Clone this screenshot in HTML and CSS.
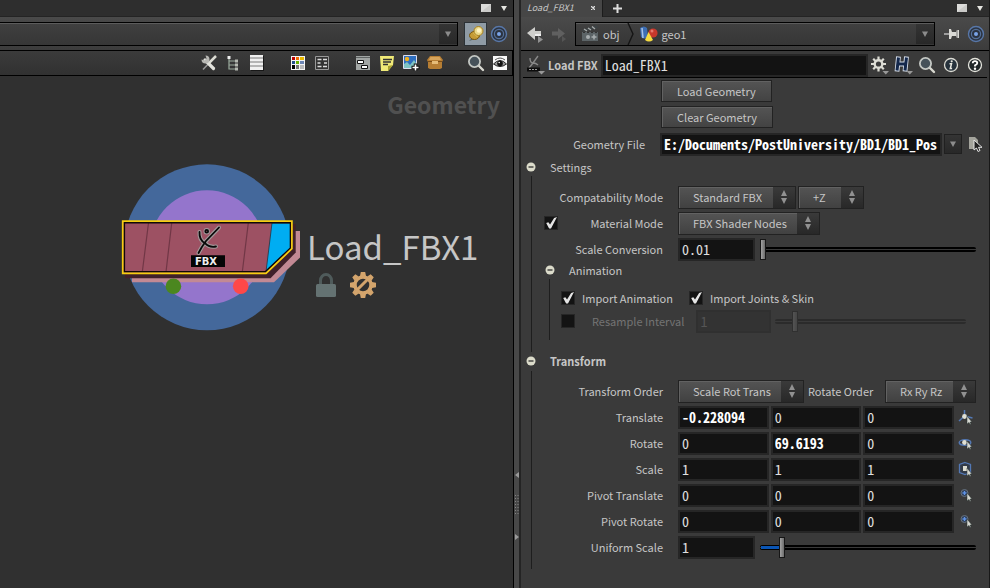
FILE: index.html
```html
<!DOCTYPE html>
<html lang="en">
<head>
<meta charset="utf-8">
<title>Load_FBX1</title>
<link rel="stylesheet" href="styles.css">
</head>
<body>
<svg class="defs" aria-hidden="true">
  <symbol id="target" viewBox="0 0 18 18"><circle cx="9" cy="9" r="7.5" fill="#2b3340" stroke="#5877a8" stroke-width="1.4"/><circle cx="9" cy="9" r="4.6" fill="none" stroke="#557099" stroke-width="1.2"/><circle cx="9" cy="9" r="2" fill="#7aa4e8"/></symbol>
  <symbol id="lens" viewBox="0 0 18 18"><path d="M11.500 11.500 16 16" stroke="#d8d8d0" stroke-width="2.400" stroke-linecap="round"/><circle cx="7.500" cy="7.500" r="5.600" fill="#46525a" stroke="#c4c8c4" stroke-width="1.800"/></symbol>
  <symbol id="updown" viewBox="0 0 8 14"><path d="M4 0 7 6H1zM4 14 1 8H7z" fill="#919191"/></symbol>
  <symbol id="minus" viewBox="0 0 10 10"><circle cx="5" cy="5" r="4.500" fill="#dcdccb"/><path d="M2.500 5h5" stroke="#222" stroke-width="1.200"/></symbol>
  <symbol id="arrow" viewBox="0 0 6 6"><path d="M0 0.500h6L3 6z" fill="#8c8c8c"/></symbol>
  <symbol id="pivot" viewBox="0 0 16 16"><circle cx="6.500" cy="6" r="3.500" fill="#31415c" stroke="#66717d"/><path d="M6.500 4v4M4.500 6h4" stroke="#5f93e6" stroke-width="1.300"/><path d="M9 6v8l2-1.500 1 2 1-.5-1-2h2z" fill="#d6d8d2" stroke="#26302e" stroke-width=".5"/></symbol>
</svg>
<div class="desk">
  <section class="pane" aria-label="Network">
    <div class="tabs">
      <button class="mini" aria-label="Maximize"><svg width="10" height="8"><path d="M0 0h10v8H0z" fill="#dcdcda"/><path d="M10 0v8H0z" fill="#cacac8"/></svg></button>
      <button class="mini" aria-label="Pane menu"><svg width="6" height="5"><path d="M0 0h6L3 5z" fill="#e4e4e0"/></svg></button>
    </div>
    <div class="pathbar">
      <div class="path"><span class="grow"></span><button class="drop" aria-label="Path history"><svg width="6" height="6"><use href="#arrow"/></svg></button></div>
      <button class="pin-on" aria-label="Pin"><svg width="22" height="22" viewBox="0 0 22 22"><path d="M4 18 8 14l2 2z" fill="#566"/><ellipse cx="9.500" cy="12.500" rx="5" ry="4" fill="#c59b36" stroke="#78570e"/><path d="m8 10 4-4 4 4-4 4z" fill="#e1c25c"/><circle cx="13.500" cy="8" r="4.500" fill="#ead88a" stroke="#a8801c"/><circle cx="14" cy="7.500" r="2.200" fill="#fff3c0"/></svg></button>
      <button class="tool" aria-label="Follow selection"><svg width="18" height="18"><use href="#target"/></svg></button>
    </div>
    <div class="toolbar">
      <div class="group">
        <button class="tool" aria-label="Tools"><svg width="18" height="18" viewBox="0 0 18 18"><path d="M15.500 2.500 3 15.500" stroke="#999" stroke-width="1.500"/><path d="M16 2 9 9" stroke="#dcdcd4" stroke-width="2.500"/><path d="M5 6l8.500 8.500" stroke="#e2e2dc" stroke-width="3.200" stroke-linecap="round"/><path d="M5.500 1.500A4 4 0 1 1 1.500 5.500L4.500 6.500 6.500 4.500z" fill="#b8b8b4"/></svg></button>
        <button class="tool" aria-label="Tree view"><svg width="14" height="16" viewBox="0 0 14 16"><path d="M3 2v12h7M3 6h7M3 10h7" fill="none" stroke="#9cac9e" stroke-width="1.200"/><path d="M1.500 1h3v3h-3z" fill="#eee"/><path d="M9 4.500h3v3H9zM9 8.500h3v3H9zM9 12.500h3v3H9z" fill="#b4b8b0"/></svg></button>
        <button class="tool" aria-label="List view"><svg width="14" height="16" viewBox="0 0 14 16"><path d="M1 1h13v15H1z" fill="#181818"/><path d="M0 0h13v15H0z" fill="#f0f0f0"/><path d="M0 2h13v2H0zM0 6h13v2H0zM0 10h13v2H0z" fill="#b4b4b4"/></svg></button>
      </div>
      <div class="group">
        <button class="tool" aria-label="Colors"><svg width="14" height="14" viewBox="0 0 14 14"><path d="M0 0h14v14H0z" fill="#f4f4f4"/><path d="M1 1h3v3H1z" fill="#b00"/><path d="M5 1h3v3H5z" fill="#f06a00"/><path d="M9 1h4v3H9z" fill="#e8b800"/><path d="M1 5h3v3H1z" fill="#24508c"/><path d="M5 5h3v3H5z" fill="#67b000"/><path d="M9 5h4v3H9z" fill="#6c86b4"/><path d="M1 9h3v4H1z" fill="#000"/><path d="M5 9h3v4H5z" fill="#777"/><path d="M9 9h4v4H9z" fill="#bbb"/></svg></button>
        <button class="tool" aria-label="Layout"><svg width="14" height="14" viewBox="0 0 14 14"><path d="M.500.500h13v13H.500z" fill="#333" stroke="#999"/><path d="M2.500 3.500h4M2.500 7h3M2.500 10.500h4M8 3.500h4M9 7h3M8 10.500h4" stroke="#ddd" stroke-width="1.400"/></svg></button>
      </div>
      <div class="group">
        <button class="tool" aria-label="Network box"><svg width="14" height="14" viewBox="0 0 14 14"><path d="M0 0h14v14H0z" fill="#a2a6a4"/><path d="M0 1.500h14" stroke="#606464"/><path d="M1.500 4.500h6v3h-6zM5.500 9.500h6v3h-6z" fill="#fff" stroke="#111"/></svg></button>
        <button class="tool" aria-label="Sticky note"><svg width="15" height="15" viewBox="0 0 15 15"><path d="M0 0h14l-1 9-5 6H1z" fill="#f0ea78"/><path d="m13 9-5 6v-5z" fill="#a8a030"/><path d="M3 3.500h9M3 6h8M3 8.500h5" stroke="#333" stroke-width="1.300"/></svg></button>
        <button class="tool" aria-label="Add image"><svg width="17" height="16" viewBox="0 0 17 16"><path d="M.500.500h13v13H.500z" fill="#2f6fc0" stroke="#dde"/><circle cx="4" cy="4" r="2.200" fill="#f2b020"/><path d="M1 13V9l3-2 3 3 4-5 2 3v5z" fill="#7fc4c4"/><path d="M12.500 8.500v8M8.500 12.500h8" stroke="#111" stroke-width="3.500"/><path d="M12.500 9.500v6M9.500 12.500h6" stroke="#fff" stroke-width="1.600"/></svg></button>
        <button class="tool" aria-label="Asset box"><svg width="16" height="14" viewBox="0 0 16 14"><path d="M3 0h10l3 4-1 2v6l-2 1H3l-2-1V6L0 4z" fill="#b67e34"/><path d="M3.500 1h9L14 4H2z" fill="#d6a45c"/><path d="M1 5.500h14" stroke="#7c4c14"/><path d="M5 5h6v3H5z" fill="#e6bc78"/></svg></button>
      </div>
      <div class="group">
        <button class="tool" aria-label="Find"><svg width="18" height="18"><use href="#lens"/></svg></button>
        <button class="tool" aria-label="Display options"><svg width="14" height="14" viewBox="0 0 14 14"><path d="M0 0h14v14H0z" fill="#fafafa"/><path d="M.500 8Q7 1 13.500 8 7 13 .500 8z" fill="#999" stroke="#222"/><circle cx="7" cy="7.500" r="2.800" fill="#111"/><path d="M2 4Q7 0 12 4" fill="none" stroke="#555"/><circle cx="6.200" cy="6.500" r=".8" fill="#fff"/></svg></button>
      </div>
    </div>
    <div class="canvas">
      <div class="context">Geometry</div>
      <svg class="node" width="200" height="180" viewBox="110 155 200 180" role="img" aria-label="Load FBX node">
        <circle cx="207" cy="247.300" r="83" fill="#44689b"/>
        <circle cx="207" cy="247.300" r="57" fill="#9475cc"/>
        <path d="M132 231H300V257.500L274 282.300H132z" fill="#c28994"/>
        <path d="M125 224H295.700V252.500L270.500 278.300H125z" fill="#40202a"/>
        <path d="M122.700 221.200H291.900V248.700L266 273.400H122.700z" fill="#9d5163"/>
        <path d="M148.500 223 142.300 272M171.700 223 166 272M248.300 223 242.300 272" stroke="#713746" stroke-width="1.200"/>
        <path d="M272 223H290.800V247.500L266 271.800z" fill="#00adf2" stroke="#243440" stroke-width=".8"/>
        <path d="M124.300 222.800H290.500V248L265.300 271.800H124.300z" fill="none" stroke="#100808" stroke-width="1.600"/>
        <path d="M122.700 221.200H291.900V248.700L266 273.400H122.700z" fill="none" stroke="#f6cd10" stroke-width="1.700"/>
        <g fill="none" stroke-linecap="round">
          <g stroke="#a3999b" stroke-width="4"><path d="M219 227.500 206 241Q201.500 247 198.500 253M199.500 232Q199 240 205 243.200C208 246.500 211 247.500 216 246.500"/><circle cx="206.700" cy="231.300" r="1.200"/></g>
          <g stroke="#090909" stroke-width="1.800"><path d="M219 227.500 206 241Q201.500 247 198.500 253M199.500 232Q199 240 205 243.200C208 246.500 211 247.500 216 246.500"/><circle cx="206.700" cy="231.300" r="1.400"/></g>
        </g>
        <path d="M191 255.300h34v11.700h-34z" fill="#050505"/>
        <text class="badge" x="206" y="265" text-anchor="middle">FBX</text>
        <circle cx="173.400" cy="286.300" r="7.800" fill="#4b871f"/>
        <circle cx="240.700" cy="286.300" r="7.800" fill="#ff4848"/>
      </svg>
      <div class="node-name">Load_FBX1</div>
      <div class="flags">
        <svg width="20" height="24" viewBox="0 0 20 24"><path d="M4.500 12V7.500a5.500 6 0 0 1 11 0V12" fill="none" stroke="#4f5b5b" stroke-width="3"/><rect y="11" width="20" height="13" rx="1.500" fill="#647272"/></svg>
        <svg width="26" height="26" viewBox="-13 -13 26 26"><g fill="#d3a46c"><path id="teeth" d="M-2.200-13h4.400l.8 4h-6zM-2.200 13h4.400l.8-4h-6z"/><use href="#teeth" transform="rotate(45)"/><use href="#teeth" transform="rotate(90)"/><use href="#teeth" transform="rotate(135)"/></g><circle r="8" fill="none" stroke="#d3a46c" stroke-width="3.500"/><path d="M-6.500 5.500 5.500-6.500" stroke="#d3a46c" stroke-width="3"/></svg>
      </div>
    </div>
  </section>

  <div class="splitter" role="separator" aria-orientation="vertical">
    <svg width="4" height="68" viewBox="0 0 4 68"><path d="M4 0v6L0 3zM0 62v6l4-3z" fill="#9a9a9a"/><path d="M.500 23v20M3 23v20" stroke="#858585" stroke-dasharray="1 2" stroke-width="1"/></svg>
  </div>

  <section class="pane params" aria-label="Parameters">
    <div class="tabs">
      <div class="tab"><span>Load_FBX1</span><button class="mini" aria-label="Close tab"><svg width="4" height="4"><path d="M0 0 4 4M4 0 0 4" stroke="#ddd" stroke-width="1.300"/></svg></button></div>
      <button class="mini add" aria-label="New tab"><svg width="9" height="9"><path d="M4.500 0v9M0 4.500h9" stroke="#ddd" stroke-width="2"/></svg></button>
      <span class="grow"></span>
      <button class="mini" aria-label="Maximize"><svg width="10" height="8"><path d="M0 0h10v8H0z" fill="#dcdcda"/><path d="M10 0v8H0z" fill="#cacac8"/></svg></button>
      <button class="mini" aria-label="Pane menu"><svg width="6" height="5"><path d="M0 0h6L3 5z" fill="#e4e4e0"/></svg></button>
    </div>
    <div class="pathbar nav">
      <button class="tool" aria-label="Back"><svg width="16" height="18" viewBox="0 0 16 18"><path d="M0 8 8 2v4h6v5H8v4z" fill="#cfcfcc"/><path d="m8 11h6V9H8z" fill="#eee"/><path d="M11 11l5 3.500-5 3.500z" fill="#919191"/></svg></button>
      <button class="tool" aria-label="Forward"><svg width="16" height="18" viewBox="0 0 16 18"><path d="M14 8.500 7 3v3.500H1v4h6V14z" fill="#606060"/><path d="M11 11l4 3-4 3z" fill="#555"/></svg></button>
      <div class="path">
        <a class="crumb" href="#obj"><svg width="17" height="17" viewBox="0 0 17 17"><path d="M0 7h16v9H0z" fill="#5c6467"/><path d="M0 5 15 0l1 3L1 7z" fill="#3c4244"/><path d="m2 4 3 2M6 3l3 2M10 1.500 13 4" stroke="#a8acac" stroke-width="1.300"/><path d="M1 7.500h14" stroke="#333" stroke-dasharray="2 2"/><circle cx="6" cy="12" r="2" fill="#a8aeb0"/><path d="M12 9.500v5M9.500 12h5" stroke="#a8aeb0" stroke-width="1.500"/></svg>obj</a>
        <svg class="chevron" width="7" height="22" viewBox="0 0 7 22"><path d="M1 0 6 11 1 22" fill="none" stroke="#151515" stroke-width="1.400"/></svg>
        <a class="crumb" href="#geo1"><svg width="18" height="16" viewBox="0 0 18 16"><path d="M0 2Q4-1 7 2l1 9q-4 3-7 0z" fill="#3d6eb4"/><path d="M2 2l1 10" stroke="#a8c4e8" stroke-width="1.500"/><circle cx="13" cy="7" r="4.600" fill="#c8382c"/><circle cx="12" cy="5" r="1.500" fill="#e8786c"/><path d="m8.500 6 4.500 8q-4 3-8 0z" fill="#f6dc40"/></svg>geo1</a>
        <span class="grow"></span><button class="drop" aria-label="Path history"><svg width="6" height="6"><use href="#arrow"/></svg></button>
      </div>
      <button class="tool" aria-label="Pin pane"><svg width="16" height="12" viewBox="0 0 16 12"><path d="M0 6h6" stroke="#bbb" stroke-width="1.500"/><path d="M5 1h2l1 3h4l1-2h2v8h-2l-1-2H8l-1 3H5z" fill="#dadad6"/><path d="M13 2v8" stroke="#777"/></svg></button>
      <button class="tool" aria-label="Follow selection"><svg width="18" height="18"><use href="#target"/></svg></button>
    </div>
    <div class="header">
      <svg class="optype" width="18" height="20" viewBox="0 0 18 20"><path d="M11 1 6 8 2 13M3 3Q3 8 6 8t5 2" fill="none" stroke="#888" stroke-width="1.400"/><path d="M0 12.500h13v4H0z" fill="#0c0c0c"/><path d="M2 14.500h9" stroke="#999" stroke-dasharray="2 1"/><path d="M11 16h7l-3.500 3.500z" fill="#999"/></svg>
      <label class="opname" for="name">Load FBX</label>
      <input class="field grow" id="name" value="Load_FBX1">
      <div class="group">
        <button class="tool" aria-label="Settings menu"><svg width="20" height="20" viewBox="0 0 20 20"><path d="M9.500 1.500v15M2 9h15M4.200 3.700l10.600 10.600M14.800 3.700 4.200 14.300" stroke="#dcdcd4" stroke-width="2.200"/><circle cx="9.500" cy="9" r="3.800" fill="#3a3a3a" stroke="#dcdcd4" stroke-width="2.400"/><path d="M13.500 16h6.500l-3.200 3.500z" fill="#999"/></svg></button>
        <button class="tool" aria-label="Houdini menu"><svg width="20" height="20" viewBox="0 0 20 20"><path d="M5.500 1.500 4 16.500M13.500 1.500 12 16.500M5 9h8" fill="none" stroke="#d4dce8" stroke-width="4.800"/><path d="M5.500 2.500 4 15.500M13.500 2.500 12 15.500M5 9h8" fill="none" stroke="#14284c" stroke-width="3"/><path d="M13.500 16h6.500l-3.200 3.500z" fill="#999"/></svg></button>
        <button class="tool" aria-label="Search parameters"><svg width="18" height="18"><use href="#lens"/></svg></button>
        <button class="tool" aria-label="Info"><svg width="16" height="16" viewBox="0 0 16 16"><circle cx="8" cy="8" r="6.500" fill="#26323c" stroke="#dcdcd4" stroke-width="1.300"/><path d="M6.500 6.700h2L7.300 11.500h1.800" fill="none" stroke="#e8e8e0" stroke-width="1.500"/><circle cx="8.700" cy="4.300" r="1.100" fill="#e8e8e0"/></svg></button>
        <button class="tool" aria-label="Help"><svg width="16" height="16" viewBox="0 0 16 16"><circle cx="8" cy="8" r="6.500" fill="#20262a" stroke="#e4e4dc" stroke-width="1.300"/><path d="M5.700 6.200Q5.800 4.200 8 4.200t2.300 1.900Q10.300 7.500 8 8.300v1.200" fill="none" stroke="#fff" stroke-width="1.800"/><circle cx="8" cy="11.800" r="1.200" fill="#fff"/></svg></button>
      </div>
    </div>

    <form class="form">
      <div class="row top"><span></span><button type="button" class="btn">Load Geometry</button></div>
      <div class="row top"><span></span><button type="button" class="btn">Clear Geometry</button></div>
      <div class="row top file">
        <label for="file">Geometry File</label>
        <div class="line">
          <input class="field grow bold" id="file" value="E:/Documents/PostUniversity/BD1/BD1_Pos">
          <button type="button" class="drop box" aria-label="Recent files"><svg width="6" height="6"><use href="#arrow"/></svg></button>
          <button type="button" class="tool pick" aria-label="Choose file"><svg width="13" height="16" viewBox="0 0 13 16"><path d="M0 1h6l3 3v9H0z" fill="#a4a49c"/><path d="M5 4v10l2.500-2 1.500 3.500 2-1-1.500-3.200H13z" fill="#222" stroke="#e4e4e4"/></svg></button>
        </div>
      </div>

      <button type="button" class="fold"><svg width="10" height="10"><use href="#minus"/></svg>Settings</button>
      <div class="block settings">
        <div class="row">
          <label for="compat">Compatability Mode</label>
          <div class="line">
            <span class="menu"><select id="compat"><option>Standard FBX</option></select><span class="knob"><svg width="8" height="14"><use href="#updown"/></svg></span></span>
            <span class="menu short"><select aria-label="Up axis"><option>+Z</option></select><span class="knob"><svg width="8" height="14"><use href="#updown"/></svg></span></span>
          </div>
        </div>
        <div class="row checked-row">
          <input type="checkbox" aria-label="Enable material mode" checked>
          <label for="material">Material Mode</label>
          <div class="line"><span class="menu"><select id="material"><option>FBX Shader Nodes</option></select><span class="knob"><svg width="8" height="14"><use href="#updown"/></svg></span></span></div>
        </div>
        <div class="row">
          <label for="scaleconv">Scale Conversion</label>
          <div class="line slide"><input class="field num" id="scaleconv" value="0.01"><input type="range" aria-label="Scale Conversion" value="0"></div>
        </div>
        <button type="button" class="fold"><svg width="10" height="10"><use href="#minus"/></svg>Animation</button>
        <div class="block animation">
          <div class="checks">
            <label><input type="checkbox" checked>Import Animation</label>
            <label><input type="checkbox" checked>Import Joints &amp; Skin</label>
          </div>
          <div class="resample">
            <input type="checkbox" aria-label="Enable resampling">
            <label for="resample">Resample Interval</label>
            <input class="field num" id="resample" value="1" disabled>
            <input type="range" aria-label="Resample Interval" value="9" disabled>
          </div>
        </div>
      </div>

      <button type="button" class="fold strong"><svg width="10" height="10"><use href="#minus"/></svg>Transform</button>
      <div class="block transform">
        <div class="row">
          <label for="xord">Transform Order</label>
          <div class="line">
            <span class="menu"><select id="xord"><option>Scale Rot Trans</option></select><span class="knob"><svg width="8" height="14"><use href="#updown"/></svg></span></span>
            <label class="inner" for="rord">Rotate Order</label>
            <span class="menu last"><select id="rord"><option>Rx Ry Rz</option></select><span class="knob"><svg width="8" height="14"><use href="#updown"/></svg></span></span>
          </div>
        </div>
        <div class="row"><label for="tx">Translate</label><div class="vec"><input class="field bold" id="tx" value="-0.228094"><input class="field" aria-label="Translate Y" value="0"><input class="field" aria-label="Translate Z" value="0"><svg width="16" height="16" viewBox="0 0 16 16"><path d="M6.500 7V1M6.500 7 1 12M6.500 7l8 2" stroke="#5378b4" stroke-width="1.500"/><circle cx="6.500" cy="7.500" r="2.400" fill="#e0e0d4"/><path d="M9 7v8l2-1.500 1 2 1-.5-1-2h2z" fill="#d6d8d2" stroke="#26302e" stroke-width=".5"/></svg></div></div>
        <div class="row"><label for="rx">Rotate</label><div class="vec"><input class="field" id="rx" value="0"><input class="field bold" aria-label="Rotate Y" value="69.6193"><input class="field" aria-label="Rotate Z" value="0"><svg width="16" height="16" viewBox="0 0 16 16"><ellipse cx="7" cy="7.500" rx="5.800" ry="2.800" fill="none" stroke="#5378b4" stroke-width="1.400"/><circle cx="6.500" cy="7.500" r="2.400" fill="#e0e0d4"/><path d="M9 6v8l2-1.500 1 2 1-.5-1-2h2z" fill="#d6d8d2" stroke="#26302e" stroke-width=".5"/></svg></div></div>
        <div class="row"><label for="sx">Scale</label><div class="vec"><input class="field" id="sx" value="1"><input class="field" aria-label="Scale Y" value="1"><input class="field" aria-label="Scale Z" value="1"><svg width="16" height="16" viewBox="0 0 16 16"><path d="M7 1.500 12.500 3.500v8L7 13.500 1.500 11.500v-8z" fill="#333b48" stroke="#5378b4" stroke-width="1.300"/><path d="M5 5h4v5H5z" fill="#dcdcd0"/><path d="M9 7v8l2-1.500 1 2 1-.5-1-2h2z" fill="#d6d8d2" stroke="#26302e" stroke-width=".5"/></svg></div></div>
        <div class="row"><label for="px">Pivot Translate</label><div class="vec"><input class="field" id="px" value="0"><input class="field" aria-label="Pivot Translate Y" value="0"><input class="field" aria-label="Pivot Translate Z" value="0"><svg width="16" height="16"><use href="#pivot"/></svg></div></div>
        <div class="row"><label for="prx">Pivot Rotate</label><div class="vec"><input class="field" id="prx" value="0"><input class="field" aria-label="Pivot Rotate Y" value="0"><input class="field" aria-label="Pivot Rotate Z" value="0"><svg width="16" height="16"><use href="#pivot"/></svg></div></div>
        <div class="row"><label for="us">Uniform Scale</label><div class="line slide"><input class="field num" id="us" value="1"><input class="filled" type="range" aria-label="Uniform Scale" value="9"></div></div>
      </div>
    </form>
  </section>
</div>
</body>
</html>
```
FILE: styles.css
```css
* { box-sizing: border-box; }
body {
  margin: 0;
  background: #303030;
  color: #c6c6c6;
  font: 11px/16px "Noto Sans CJK SC", "Noto Sans", sans-serif;
}
button, input, select { font: inherit; color: inherit; margin: 0; }
button { padding: 0; border: 0; background: none; }
svg { display: block; flex: none; }
.defs { position: absolute; width: 0; height: 0; }
.grow { flex: 1; min-width: 0; }

.desk { display: grid; grid-template-columns: 513fr 8px 469fr; min-height: 100vh; }
.pane { display: flex; flex-direction: column; min-width: 0; }

/* Pane tabs */
.tabs { display: flex; justify-content: flex-end; align-items: center; height: 17px; background: #2e2e2e; border-bottom: 1px solid #242424; }
.mini { display: grid; place-items: center; width: 18px; height: 16px; }
.tab { display: flex; align-items: center; justify-content: space-between; width: 82px; height: 17px; padding-left: 6px; background: #464646; border-right: 1px solid #1c1c1c; font-size: 9px; font-style: italic; }
.add { width: 28px; }

/* Path bar and toolbars */
.pathbar { display: flex; align-items: center; height: 34px; padding-right: 2px; background: linear-gradient(#4a4a4a, #3c3c3c); border-bottom: 1px solid #000; }
.path { display: flex; flex: 1; align-items: center; height: 24px; margin-right: 6px; background: linear-gradient(#404040, #363636); border: 1px solid #000; border-left: 0; box-shadow: inset 0 1px #5c5c5c; }
.drop { display: grid; place-items: center; width: 18px; height: 20px; background: linear-gradient(#343434, #282828); }
.pin-on { display: grid; place-items: center; width: 23px; height: 24px; background: #8f9ba5; border: 1px solid #2c3236; }
.tool { display: grid; place-items: center; width: 24px; height: 24px; }
.toolbar { display: flex; justify-content: flex-end; align-items: center; gap: 17px; height: 25px; background: linear-gradient(#3b3b3b, #313131); border-bottom: 1px solid #000; border-right: 1px solid #000; }
.group { display: flex; }

/* Network canvas */
.canvas { position: relative; flex: 1; background: #303030; }
.context { padding: 10px 13px 0 0; text-align: right; font-size: 23px; font-weight: 700; line-height: 36px; color: #505050; }
.node { position: absolute; left: 110px; top: 79px; }
.badge { font: 700 10px "DejaVu Sans", sans-serif; fill: #eee; }
.node-name { position: absolute; left: 307px; top: 145px; font-size: 33px; line-height: 50px; color: #c6c6c6; }
.flags { position: absolute; left: 316px; top: 196px; display: flex; align-items: center; gap: 14px; }

.splitter { display: flex; flex-direction: column; justify-content: flex-end; align-items: center; padding-bottom: 49px; background: #484848; border-left: 1px solid #000; border-right: 2px solid #242424; }

/* Parameter pane */
.params { background: #3a3a3a; border-right: 1px solid #181818; }
.nav { padding-right: 1px; }
.nav .tool:first-child { margin-left: 2px; }
.nav .path { margin: 0 5px 0 4px; border-left: 1px solid #000; }
.crumb { display: flex; align-items: center; gap: 4px; padding: 0 7px 0 6px; color: inherit; text-decoration: none; }
.header { display: flex; align-items: center; gap: 3px; height: 27px; margin: 0 2px; padding: 2px 0 0 4px; border-bottom: 1px solid #000; }
.opname { font-weight: 700; }
.header .group { margin-left: -4px; }

.field { width: 100%; min-width: 0; height: 23px; padding: 0 2px; background: #131313; border: 2px solid #262626; border-radius: 0; outline: 0; color: #e0e0e0; font: 14px/16px "Noto Sans Mono CJK SC", "DejaVu Sans Mono", monospace; }
.bold { font-weight: 700; color: #fff; }
.form { padding: 0 13px 20px 5px; }
.row { display: grid; grid-template-columns: 131px minmax(0, 1fr); gap: 15px; align-items: center; height: 26px; }
.row label { text-align: right; white-space: nowrap; }
.top { grid-template-columns: 119px minmax(0, 1fr); }
.file { height: 28px; }
.line { display: flex; align-items: center; gap: 2px; min-width: 0; }
.btn { justify-self: start; height: 22px; margin-left: 1px; padding: 0 15px; background: linear-gradient(#545454, #434343); border: 1px solid #222; box-shadow: inset 1px 1px #626262; }
.box { height: 20px; border: 1px solid #202020; }
.pick { width: 22px; margin-right: -10px; }

.fold { display: flex; align-items: center; gap: 14px; height: 18px; }
.strong { font-weight: 700; }
.block { margin-left: 5px; border-left: 1px solid #1e1e1e; }
.settings { padding: 8px 0 12px; }
.settings .fold { margin: -2px 0 0 13px; height: 19px; }
.animation { margin-left: 17px; padding: 9px 10px 6px 11px; }
.transform { margin-top: 1px; padding: 7px 0 9px; }

.menu { display: grid; min-width: 0; }
.menu > * { grid-area: 1 / 1; }
.menu select { height: 23px; padding: 0 32px 0 14px; appearance: none; background: linear-gradient(#545454, #414141); border: 1px solid #222; border-radius: 0; box-shadow: inset 1px 1px #626262; }
.knob { display: grid; place-items: center; justify-self: end; width: 22px; height: 21px; margin: 1px; background: linear-gradient(#3a3a3a, #282828); pointer-events: none; }
.short { width: 66px; }
.inner { margin-left: 2px; }
.last { margin-left: auto; }

.num { width: 77px; flex: none; }
.slide { gap: 5px; }
.vec { display: grid; grid-template-columns: repeat(3, minmax(0, 1fr)) 20px; gap: 2px; align-items: center; }
.vec svg { justify-self: center; }

input[type="checkbox"] { width: 14px; height: 14px; flex: none; appearance: none; background: #131313; border: 1px solid #262626; }
input[type="checkbox"]:checked::before { content: ""; display: block; width: 12px; height: 12px; background: #e4e4e4; clip-path: polygon(10% 50%, 28% 44%, 42% 62%, 76% 8%, 100% 0, 50% 96%, 34% 96%); }
.checked-row { grid-template-columns: 14px 102px minmax(0, 1fr); }
.checked-row input { margin-left: 12px; }
.checks { display: flex; gap: 16px; height: 20px; align-items: center; }
.checks label { display: flex; align-items: center; gap: 7px; }
.resample { display: flex; align-items: center; height: 26px; }
.resample label { margin: 0 12px 0 17px; color: #747474; }
.resample .field { width: 75px; background: #333; border-color: #303030; color: #555; margin-right: 4px; }

input[type="range"] { flex: 1; min-width: 0; height: 21px; appearance: none; background: none; }
input[type="range"]::-webkit-slider-runnable-track { height: 5px; background: linear-gradient(#000 0 2px, #3a3a3a 2px 3px, #000 3px); border-radius: 2px; }
input[type="range"]::-webkit-slider-thumb { width: 6px; height: 21px; margin-top: -8px; appearance: none; background: linear-gradient(90deg, #a2a2a2, #6c6c6c); border: 1px solid #161616; }
input[type="range"].filled::-webkit-slider-runnable-track { background: linear-gradient(90deg, #0a55b4 9%, #0000 9%) 1px 1px / 100% 3px no-repeat, linear-gradient(#000 0 2px, #3a3a3a 2px 3px, #000 3px); }
input[type="range"]:disabled { opacity: 0.25; }
```
